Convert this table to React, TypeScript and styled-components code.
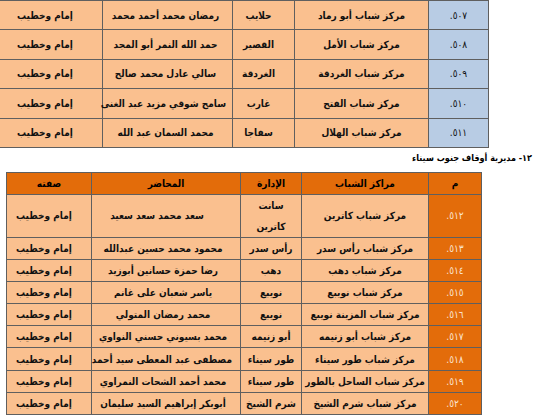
import React from 'react';
import styled, { createGlobalStyle } from 'styled-components';

const GlobalStyle = createGlobalStyle`
  html, body {
    margin: 0;
    padding: 0;
    background: #ffffff;
  }
  body {
    font-family: "DejaVu Sans Condensed", "DejaVu Sans", sans-serif;
  }
`;

const Page = styled.div`
  width: 550px;
  height: 415px;
  overflow: hidden;
  direction: rtl;
  display: flex;
  flex-direction: column;
`;

const Table = styled.table<{ $width: number; $right: number }>`
  border-collapse: collapse;
  table-layout: fixed;
  width: ${p => p.$width}px;
  margin-right: ${p => p.$right}px;
  direction: rtl;
`;

const Row = styled.tr<{ $h: number }>`
  height: ${p => p.$h}px;
`;

const Cell = styled.td<{ $tone?: 'peach' | 'blue' | 'orange'; $wrap?: boolean; $pr?: number }>`
  border: 1px solid #5f5f5f;
  padding: 0 ${p => p.$pr ?? 2}px 0 2px;
  text-align: center;
  vertical-align: middle;
  font-size: 10px;
  font-weight: bold;
  line-height: 21px;
  color: ${p => (p.$tone === 'orange' ? '#fbe3cf' : '#111')};
  background: ${p =>
    p.$tone === 'blue' ? '#b8cce4' : p.$tone === 'orange' ? '#e36c0a' : '#fac08f'};
  white-space: ${p => (p.$wrap ? 'normal' : 'nowrap')};
`;

const Index = styled(Cell)`
  font-weight: normal;
`;

const Head = styled.th`
  border: 1px solid #5f5f5f;
  padding: 0;
  text-align: center;
  font-size: 10px;
  font-weight: bold;
  color: #000;
  background: #e36c0a;
`;

const Heading = styled.div`
  margin: 3px 18px 0 0;
  height: 22px;
  font-size: 9px;
  font-weight: bold;
  color: #000;
  line-height: 14px;
`;

const top = [
  ['٥٠٧.', 'مركز شباب أبو رماد', 'حلايب', 'رمضان محمد أحمد محمد'],
  ['٥٠٨.', 'مركز شباب الأمل', 'القصير', 'حمد الله النمر أبو المجد'],
  ['٥٠٩.', 'مركز شباب الغردقة', 'الغردقة', 'سالي عادل محمد صالح'],
  ['٥١٠.', 'مركز شباب الفتح', 'غارب', 'سامح شوقي مزيد عبد الغنى'],
  ['٥١١.', 'مركز شباب الهلال', 'سفاجا', 'محمد السمان عبد الله'],
];

const south = [
  ['٥١٣.', 'مركز شباب رأس سدر', 'رأس سدر', 'محمود محمد حسين عبدالله'],
  ['٥١٤.', 'مركز شباب دهب', 'دهب', 'رضا حمزة حسانين أبوزيد'],
  ['٥١٥.', 'مركز شباب نويبع', 'نويبع', 'ياسر شعبان على غانم'],
  ['٥١٦.', 'مركز شباب المزينة نويبع', 'نويبع', 'محمد رمضان المتولي'],
  ['٥١٧.', 'مركز شباب أبو زنيمه', 'أبو زنيمه', 'محمد بسيوني حسني النواوي'],
  ['٥١٨.', 'مركز شباب طور سيناء', 'طور سيناء', 'مصطفى عبد المعطى سيد أحمد'],
  ['٥١٩.', 'مركز شباب الساحل بالطور', 'طور سيناء', 'محمد أحمد الشحات النمراوي'],
  ['٥٢٠.', 'مركز شباب شرم الشيخ', 'شرم الشيخ', 'أبوبكر إبراهيم السيد سليمان'],
];

const role = 'إمام وخطيب';

export default function App() {
  return (
    <Page>
      <GlobalStyle />
      <Table $width={489} $right={61}>
        <colgroup>
          <col style={{ width: 60 }} />
          <col style={{ width: 134 }} />
          <col style={{ width: 62 }} />
          <col style={{ width: 130 }} />
          <col style={{ width: 103 }} />
        </colgroup>
        <tbody>
          {top.map(r => (
            <Row key={r[0]} $h={29.4}>
              <Index $tone="blue">{r[0]}</Index>
              <Cell>{r[1]}</Cell>
              <Cell $pr={12}>{r[2]}</Cell>
              <Cell $pr={6}>{r[3]}</Cell>
              <Cell $pr={14}>{role}</Cell>
            </Row>
          ))}
        </tbody>
      </Table>

      <Heading>١٢- مديرية أوقاف جنوب سيناء</Heading>

      <Table $width={475} $right={68}>
        <colgroup>
          <col style={{ width: 53 }} />
          <col style={{ width: 127 }} />
          <col style={{ width: 61 }} />
          <col style={{ width: 149 }} />
          <col style={{ width: 85 }} />
        </colgroup>
        <thead>
          <Row $h={22}>
            <Head>م</Head>
            <Head>مراكز الشباب</Head>
            <Head>الإدارة</Head>
            <Head>المحاضر</Head>
            <Head>صفته</Head>
          </Row>
        </thead>
        <tbody>
          <Row $h={43}>
            <Index $tone="orange">٥١٢.</Index>
            <Cell>مركز شباب كاترين</Cell>
            <Cell $wrap>
              سانت
              <br />
              كاترين
            </Cell>
            <Cell $pr={20}>سعد محمد سعد سعيد</Cell>
            <Cell $pr={12}>{role}</Cell>
          </Row>
          {south.map(r => (
            <Row key={r[0]} $h={22.2}>
              <Index $tone="orange">{r[0]}</Index>
              <Cell>{r[1]}</Cell>
              <Cell>{r[2]}</Cell>
              <Cell $pr={8}>{r[3]}</Cell>
              <Cell $pr={12}>{role}</Cell>
            </Row>
          ))}
        </tbody>
      </Table>
    </Page>
  );
}
